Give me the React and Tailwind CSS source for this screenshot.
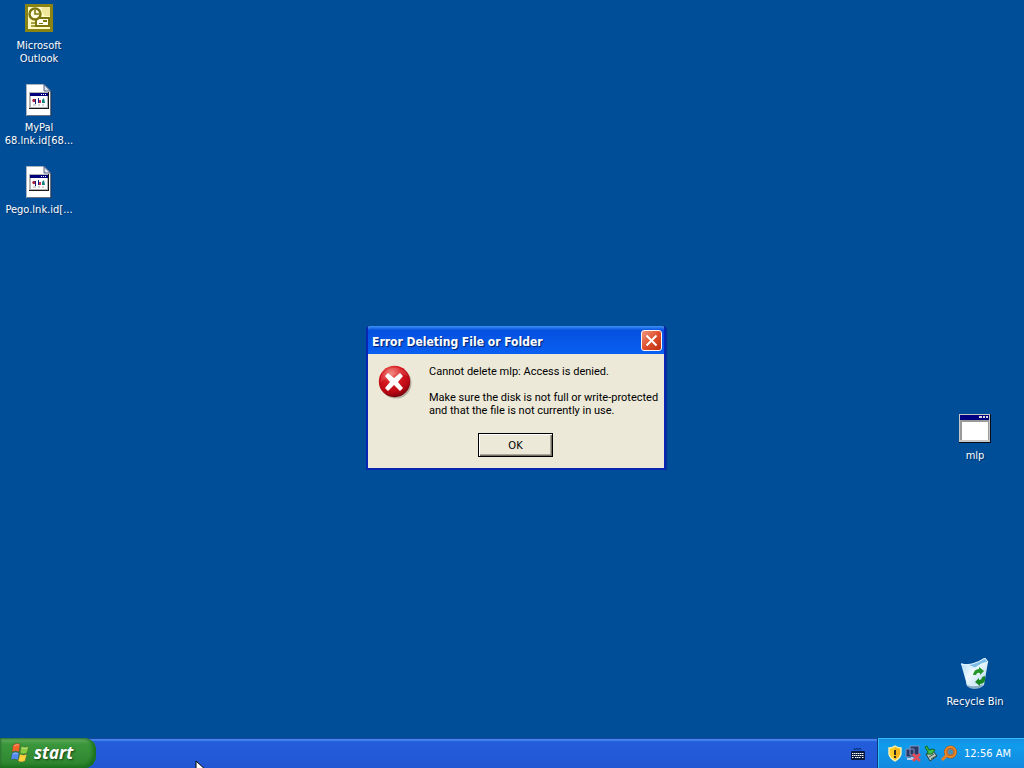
import React from "react";

function OutlookIcon() {
  return (
    <svg width="32" height="32" viewBox="0 0 32 32" aria-hidden="true">
      <rect x="2" y="2" width="28" height="28" fill="#8a8414" />
      <rect x="5" y="5" width="22" height="22" fill="#fffbc4" />
      <path d="M19 5h8v9h-5l-3-4z" fill="#f0e79a" />
      <rect x="13" y="16" width="13" height="8" fill="#fffef0" stroke="#7c760f" strokeWidth="2" />
      <path d="M20 18h4v2h-4zM16 21h4v1h-4z" fill="#7c760f" />
      <circle cx="12" cy="12" r="5.500" fill="#fffde0" stroke="#7c760f" strokeWidth="2.400" />
      <path d="M12 8v4h4" fill="none" stroke="#7c760f" strokeWidth="1.600" />
      <path d="M8 21h4M8 24h4" stroke="#8a8414" strokeWidth="1.600" />
    </svg>
  );
}

function DocIcon() {
  return (
    <svg width="32" height="32" viewBox="0 0 32 32" aria-hidden="true">
      <path d="M3.500.500H21L27.500 7v24.500h-24z" fill="#fff" stroke="#a9b2bf" />
      <path d="M21 .500V7h6.500z" fill="#dfe5f0" stroke="#24365f" strokeWidth=".8" />
      <path d="M28 7v25H4" fill="none" stroke="#26354f" />
      <rect x="6" y="8" width="20" height="17" fill="#181818" />
      <rect x="6" y="8" width="19" height="16" fill="#b4b4b4" />
      <rect x="7" y="9" width="18" height="3" fill="#00007c" />
      <path d="M18 10h1v1h-1zM20 10h1v1h-1zM22 10h1v1h-1z" fill="#fff" />
      <rect x="8" y="12" width="16" height="11" fill="#fff" />
      <circle cx="11" cy="16.500" r="1.700" fill="#a72240" />
      <path d="M12 15h1v5h-1zM15 14h1v5h-1z" fill="#1a2380" />
      <path d="M16 16h2v3h-2z" fill="#d52a52" />
      <path d="M19 19v-3l2-2 1 5z" fill="#148080" />
      <path d="M10 21h3M15 21h2M19 21h2" stroke="#aaa" />
    </svg>
  );
}

function ProgramIcon() {
  return (
    <svg width="32" height="32" viewBox="0 0 32 32" aria-hidden="true">
      <rect x="0" y="2" width="32" height="29" fill="#080b16" />
      <rect x="0" y="2" width="31" height="28" fill="#c8c8c8" />
      <rect x="1" y="3" width="29" height="5" fill="#000080" />
      <path d="M20 4h3v2h-3zM24 4h2v2h-2zM27 4h2v2h-2z" fill="#ddd" />
      <path d="M1 8h29v20H1z" fill="#999" />
      <path d="M3 10h26v18H3z" fill="#fff" />
    </svg>
  );
}

function RecycleIcon() {
  return (
    <svg width="32" height="32" viewBox="0 0 32 32" aria-hidden="true">
      <defs>
        <linearGradient id="bin" x1="0" y1="0" x2="1" y2="1">
          <stop offset="0" stopColor="#a4d7f4" />
          <stop offset=".45" stopColor="#eef9ff" />
          <stop offset="1" stopColor="#a9cfe5" />
        </linearGradient>
      </defs>
      <path d="M2 6q10 3 24-6l3 4-4 23q-8 6-17 0z" fill="url(#bin)" />
      <path d="M2 6q10 3 24-6l3 4q-7 1-13 6Q8 6 2 6z" fill="#80bde6" />
      <path d="M2 6q10 3 24-6l3 4q-7 1-13 6Q8 6 2 6z" fill="none" stroke="#e3f6ff" />
      <path d="M7 24q9 5 18 0l-1 4q-8 4-16 0z" fill="#d8effb" />
      <path d="M8 27q8 3 16-1l-1 3q-8 4-14 0z" fill="#88adc5" />
      <path d="M14 17q1-6 6-6V9l5 4-4 4v-2q-3-1-4 2z" fill="#26962b" />
      <path d="M26 18q1 8-5 8v2l-5-4 4-4v2q3 0 3-3z" fill="#168522" />
    </svg>
  );
}

function DesktopItem({ icon, children, className = "" }) {
  return (
    <button type="button" className={"flex w-[78px] flex-col items-center text-center text-[11px] leading-[13px] text-white [text-shadow:1px_1px_1px_#002f66] " + className}>
      {icon}
      <span className="mt-1 pt-px whitespace-pre-line">{children}</span>
    </button>
  );
}

function ErrorIcon() {
  return (
    <svg width="34" height="34" viewBox="0 0 34 34" className="shrink-0" aria-hidden="true">
      <defs>
        <radialGradient id="err" cx=".4" cy=".25" r=".8">
          <stop offset="0" stopColor="#f07b70" />
          <stop offset=".4" stopColor="#d71920" />
          <stop offset=".75" stopColor="#b90814" />
          <stop offset="1" stopColor="#650008" />
        </radialGradient>
      </defs>
      <circle cx="18" cy="18" r="15.500" fill="#777467" opacity=".5" />
      <circle cx="16.500" cy="16.500" r="15.700" fill="url(#err)" />
      <path d="M3 12C7 1 25-1 30 11c-8-4-18-1-27 6z" fill="#fff" opacity=".12" />
      <path d="M10 8l6 5 6-5 3 3-5 6 5 6-3 3-6-6-6 6-3-3 5-6-5-6z" fill="#fff" />
    </svg>
  );
}

function ErrorDialog() {
  return (
    <section role="dialog" aria-labelledby="error-title" className="absolute left-[366px] top-[326px] w-[300px] overflow-hidden rounded-t-[4px] border-x-2 border-b-2 border-[#0826b4] bg-[#ece9d8] shadow-[1px_0_0_#0a3090]">
      <header className="flex h-7 items-center justify-between bg-linear-to-b from-[#3b91f5] via-[#0550df] via-15% to-[#0960f2] pl-1 pr-[2px] text-white">
        <h1 id="error-title" className="pt-1 font-['DejaVu_Sans_Condensed','Noto_Sans',sans-serif] text-[12px] font-bold leading-4 [text-shadow:1px_1px_1px_#001f70]">Error Deleting File or Folder</h1>
        <button type="button" aria-label="Close" className="mt-px flex size-[21px] items-center justify-center rounded-[3px] border border-[#fff4ee] bg-linear-to-br from-[#ee957c] via-[#df4e2c] to-[#bd2e10]">
          <svg width="13" height="13" viewBox="0 0 13 13" aria-hidden="true"><path d="M1.500 1.500l10 10m0-10l-10 10" stroke="#fff" strokeWidth="2" /></svg>
        </button>
      </header>
      <div className="flex gap-[17px] pl-[10px] pt-[11px] text-black">
        <ErrorIcon />
        <div className="whitespace-nowrap font-['Roboto','DejaVu_Sans_Condensed',sans-serif] text-[11px] leading-[13px]">
          <p>Cannot delete mlp: Access is denied.</p>
          <p className="mt-[13px]">Make sure the disk is not full or write-protected<br />and that the file is not currently in use.</p>
        </div>
      </div>
      <div className="flex justify-center pb-[11px] pr-px pt-4">
        <button type="button" className="h-6 w-[75px] border border-black bg-[#ece9d8] text-[11px] leading-[13px] text-black shadow-[inset_1px_1px_0_#fff,inset_-1px_-1px_0_#716f64,inset_-2px_-2px_0_#aca899]">OK</button>
      </div>
    </section>
  );
}

function WindowsLogo() {
  return (
    <svg width="20" height="20" viewBox="0 0 20 20" aria-hidden="true">
      <g stroke="#263e3b" strokeWidth=".3">
        <path d="M3 2q4-3 7-1L9 9Q5 7 2 9z" fill="#f26327" />
        <path d="M11 3q4 2 8 0l-2 7q-4 2-7 0z" fill="#86ca3e" />
        <path d="M2 10q4-2 7 0l-1 7q-4-2-7 0z" fill="#528bef" />
        <path d="M10 11q4 2 7 0l-2 7q-4 2-7 0z" fill="#ffd13a" />
      </g>
      <path d="M4 3q3-2 5-1M12 5q3 1 5 0M3 11q3-2 5 0" stroke="#fff" opacity=".4" fill="none" />
    </svg>
  );
}

function KeyboardIcon() {
  return (
    <svg width="14" height="14" viewBox="0 0 14 14" aria-hidden="true">
      <path d="M3 1l1 2 2-2 1 2 2-2 1 2" fill="none" stroke="#082b75" />
      <rect x="0" y="4" width="14" height="9" rx="1" fill="#08183d" />
      <path d="M1 6.500h12M1 8.500h12M1 10.500h2M4 10.500h6M11 10.500h2" stroke="#fff" strokeWidth="1.200" strokeDasharray="1.500 .5" />
    </svg>
  );
}

function ShieldIcon() {
  return (
    <svg width="16" height="18" viewBox="0 0 16 18" aria-hidden="true">
      <path d="M8 1q3 2 6 2v6q-1 4-6 7-5-3-6-7V3q3 0 6-2z" fill="#ffce26" stroke="#fff3b0" strokeWidth="1.400" />
      <path d="M8 2q2 2 5 2v5q-1 3-5 6z" fill="#f2b51d" />
      <path d="M8 5v5M8 11v2" stroke="#302d22" strokeWidth="2" />
    </svg>
  );
}

function NetworkIcon() {
  return (
    <svg width="18" height="18" viewBox="0 0 18 18" aria-hidden="true">
      <path d="M6 1h9v9H6zM2 4h8v8H2z" fill="#293866" stroke="#8195bf" />
      <path d="M3 14h7M8 12v3" stroke="#bac9e6" strokeWidth="2" />
      <path d="M9 9l7 7m0-7l-7 7" stroke="#e54b55" strokeWidth="2.500" />
    </svg>
  );
}

function DeviceIcon() {
  return (
    <svg width="16" height="18" viewBox="0 0 16 18" aria-hidden="true">
      <path d="M3 9l7-3 4 5-7 5z" fill="#b6c6b9" stroke="#263e42" />
      <path d="M6 12l5-3M8 14l5-3" stroke="#455c5a" />
      <path d="M2 2l2-1 2 4 3-1 3 1-3 4H4l1-2z" fill="#3fc04b" stroke="#116726" />
    </svg>
  );
}

function SearchIcon() {
  return (
    <svg width="18" height="18" viewBox="0 0 18 18" aria-hidden="true">
      <circle cx="10.500" cy="7" r="5" fill="#b97b4f" stroke="#a14b12" strokeWidth="3" />
      <circle cx="10.500" cy="7" r="5" fill="none" stroke="#f28d27" strokeWidth="2" />
      <path d="M7 10l-5 5" stroke="#e88120" strokeWidth="3" />
      <circle cx="10.500" cy="7" r="2.500" fill="#438fb8" />
    </svg>
  );
}

export default function App() {
  return (
    <div className="relative flex min-h-screen flex-col overflow-hidden bg-[#004e98] font-['Tahoma','DejaVu_Sans_Condensed','DejaVu_Sans',sans-serif]">
      <main className="relative flex-1">
        <div className="absolute left-0 top-[2px] flex flex-col gap-[19px]">
          <DesktopItem icon={<OutlookIcon />}>{"Microsoft\nOutlook"}</DesktopItem>
          <DesktopItem icon={<DocIcon />}>{"MyPal\n68.lnk.id[68..."}</DesktopItem>
          <DesktopItem icon={<DocIcon />}>Pego.lnk.id[...</DesktopItem>
        </div>
        <DesktopItem className="absolute right-[10px] top-[412px]" icon={<ProgramIcon />}>mlp</DesktopItem>
        <DesktopItem className="absolute right-[10px] top-[658px]" icon={<RecycleIcon />}>Recycle Bin</DesktopItem>
        <ErrorDialog />
      </main>

      <footer className="flex h-[30px] items-stretch bg-linear-to-b from-[#2360cf] via-[#245ddb] via-20% to-[#2056d2] shadow-[inset_0_1px_0_#1746a5,inset_0_3px_1px_#4283ed]">
        <button type="button" className="flex w-24 items-center gap-1 rounded-r-xl bg-linear-to-b from-[#6aaf66] via-[#3b973b] via-20% to-[#2d842e] pl-[10px] text-white shadow-[inset_-3px_-2px_4px_#176e1b,inset_1px_1px_2px_#2f7335]">
          <WindowsLogo />
          <span className="font-['Open_Sans','Noto_Sans',sans-serif] text-[17px] font-bold italic leading-5 [text-shadow:1px_1px_2px_#123f16]">start</span>
        </button>
        <div className="flex flex-1 items-center justify-end pr-3 pt-px"><KeyboardIcon /></div>
        <div className="flex w-[147px] items-center border-l border-[#0b3980] bg-linear-to-b from-[#168ce0] via-[#109cec] via-25% to-[#1389de] pl-[9px] pt-px shadow-[inset_1px_1px_0_#35bdfa]">
          <div className="flex items-center gap-px">
            <ShieldIcon /><NetworkIcon /><DeviceIcon /><SearchIcon />
          </div>
          <time className="ml-[6px] whitespace-nowrap text-[11px] leading-[13px] text-white">12:56 AM</time>
        </div>
      </footer>

      <svg className="absolute left-[195px] top-[760px]" width="12" height="19" viewBox="0 0 12 19" aria-hidden="true">
        <path d="M1 1v15l4-4 3 6 2-1-3-6h5z" fill="#fff" stroke="#000" />
      </svg>
    </div>
  );
}
